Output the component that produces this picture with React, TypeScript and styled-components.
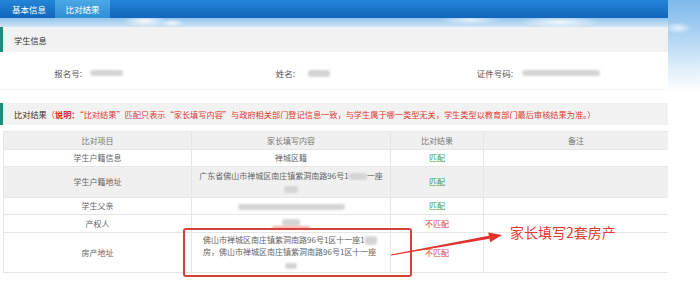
import styled, { createGlobalStyle } from "styled-components";

const GlobalStyle = createGlobalStyle`
  html, body {
    margin: 0;
    padding: 0;
    background: #fff;
  }
  body {
    font-family: "Noto Sans CJK SC", "Noto Sans", sans-serif;
  }
`;

const Page = styled.div`
  position: relative;
  display: flex;
  width: 700px;
  height: 293px;
  overflow: hidden;
  background: #fff;
`;

const Main = styled.div`
  width: 668px;
  flex-shrink: 0;
`;

const SkySide = styled.div`
  flex: 1;
  background:
    radial-gradient(ellipse 14px 6px at 10px 28px, rgba(255, 255, 255, 0.7), transparent),
    linear-gradient(180deg, #7db8ea 0%, #a6cff2 30px, #d6eaf9 62px, #ffffff 92px);
`;

const TabBar = styled.div`
  display: flex;
  height: 18px;
  padding-left: 3px;
  background: linear-gradient(180deg, #2385d8 0%, #1266bb 100%);
`;

const Tab = styled.div<{ $active?: boolean }>`
  display: flex;
  align-items: center;
  justify-content: center;
  width: ${(p) => (p.$active ? 55 : 52)}px;
  font-size: 8.5px;
  color: #fff;
  background: ${(p) =>
    p.$active ? "linear-gradient(180deg, #4aa8e6 0%, #2f8fd6 100%)" : "transparent"};
`;

const SkyBand = styled.div`
  height: 9px;
  background:
    radial-gradient(ellipse 22px 6px at 145px 3px, rgba(255, 255, 255, 0.9), transparent),
    radial-gradient(ellipse 12px 4px at 172px 5px, rgba(255, 255, 255, 0.8), transparent),
    radial-gradient(ellipse 30px 5px at 470px 2px, rgba(255, 255, 255, 0.7), transparent),
    radial-gradient(ellipse 40px 6px at 560px 4px, rgba(255, 255, 255, 0.8), transparent),
    linear-gradient(180deg, #93c4ec 0%, #cfe5f6 100%);
`;

const SectionHead = styled.div<{ $h: number; $gap?: number }>`
  display: flex;
  align-items: center;
  height: ${(p) => p.$h}px;
  margin-top: ${(p) => p.$gap ?? 0}px;
  padding-left: 11px;
  border-left: 3px solid #1c8c7c;
  background: #f2f2f2;
  font-size: 8.2px;
  color: #333;
  white-space: nowrap;
`;

const RedNote = styled.span`
  color: #e03a30;
`;

const RedBold = styled.b`
  color: #d82a20;
  font-weight: 700;
`;

const InfoRow = styled.div`
  display: flex;
  align-items: center;
  height: 38px;
  padding-top: 5px;
  box-sizing: border-box;
  border-bottom: 1px solid #f4f4f4;
`;

const Field = styled.div<{ $w?: number }>`
  display: flex;
  align-items: center;
  width: ${(p) => (p.$w ? `${p.$w}px` : "auto")};
  flex-shrink: 0;
`;

const Label = styled.span<{ $w: number; $gap: number }>`
  width: ${(p) => p.$w}px;
  margin-right: ${(p) => p.$gap}px;
  text-align: right;
  font-size: 8.5px;
  color: #555;
`;

const Blur = styled.span<{ $w: number; $h?: number; $pink?: boolean }>`
  display: inline-block;
  vertical-align: middle;
  width: ${(p) => p.$w}px;
  height: ${(p) => p.$h ?? 6}px;
  border-radius: 3px;
  background: ${(p) => (p.$pink ? "#f2b3ad" : "#d4d4d4")};
  filter: blur(1.2px);
`;

const Table = styled.table`
  margin: 6px 0 0 3px;
  width: 665px;
  border-collapse: collapse;
  table-layout: fixed;
  font-size: 8px;
  color: #666;
`;

const Row = styled.tr<{ $h: number; $shade?: boolean }>`
  height: ${(p) => p.$h}px;
  background: ${(p) => (p.$shade ? "#f0f0f0" : "#fff")};
`;

const Cell = styled.td<{ $left?: boolean }>`
  padding: 0 ${(p) => (p.$left ? "11px" : "0")};
  border: 1px solid #e6e6e6;
  text-align: ${(p) => (p.$left ? "left" : "center")};
  line-height: 12px;
  white-space: nowrap;
  overflow: hidden;
`;

const HeadCell = styled(Cell)`
  color: #777;
`;

const Stack = styled.div<{ $center?: boolean }>`
  display: flex;
  flex-direction: column;
  align-items: ${(p) => (p.$center ? "center" : "flex-start")};
`;

const Spot = styled.div`
  align-self: center;
  margin-top: 1px;
`;

const Result = styled.span<{ $ok: boolean }>`
  color: ${(p) => (p.$ok ? "#3a9b3a" : "#d9463e")};
`;

const Marker = styled.div`
  position: absolute;
  left: 183px;
  top: 228px;
  width: 229px;
  height: 49px;
  box-sizing: border-box;
  border: 2px solid #d2413a;
  border-radius: 3px;
`;

const Arrow = styled.svg`
  position: absolute;
  left: 380px;
  top: 220px;
`;

const Callout = styled.div`
  position: absolute;
  left: 510px;
  top: 222px;
  font-size: 14px;
  line-height: 20px;
  color: #e23b2e;
  white-space: nowrap;
`;

const rows = [
  { name: "学生户籍信息", h: 17, ok: true },
  { name: "学生户籍地址", h: 31, ok: true, shade: true },
  { name: "学生父亲", h: 17, ok: true },
  { name: "产权人", h: 18, ok: false },
  { name: "房产地址", h: 40, ok: false },
];

function content(name: string) {
  switch (name) {
    case "学生户籍信息":
      return "禅城区籍";
    case "学生户籍地址":
      return (
        <Stack $center>
          <span>
            广东省佛山市禅城区南庄镇紫洞南路96号1<Blur $w={18} $h={7} />一座
          </span>
          <Spot>
            <Blur $w={14} $h={7} />
          </Spot>
        </Stack>
      );
    case "学生父亲":
      return <Blur $w={107} $h={6} />;
    case "产权人":
      return (
        <Stack $center>
          <Blur $w={18} $h={7} />
          <Blur $w={38} $h={3} $pink />
        </Stack>
      );
    default:
      return null;
  }
}

export default function App() {
  return (
    <>
      <GlobalStyle />
      <Page>
        <Main>
          <TabBar>
            <Tab>基本信息</Tab>
            <Tab $active>比对结果</Tab>
          </TabBar>
          <SkyBand />

          <SectionHead $h={25}>学生信息</SectionHead>
          <InfoRow>
            <Field $w={222}>
              <Label $w={82} $gap={8}>报名号:</Label>
              <Blur $w={33} $h={6} />
            </Field>
            <Field $w={222}>
              <Label $w={73} $gap={13}>姓名:</Label>
              <Blur $w={22} $h={7} />
            </Field>
            <Field>
              <Label $w={69} $gap={9}>证件号码:</Label>
              <Blur $w={78} $h={6} />
            </Field>
          </InfoRow>

          <SectionHead $h={22} $gap={13}>
            比对结果
            <RedNote>
              （<RedBold>说明：</RedBold>“比对结果”匹配只表示“家长填写内容”与政府相关部门登记信息一致，与学生属于哪一类型无关，学生类型以教育部门最后审核结果为准。）
            </RedNote>
          </SectionHead>

          <Table>
            <colgroup>
              <col style={{ width: 188 }} />
              <col style={{ width: 199 }} />
              <col style={{ width: 93 }} />
              <col style={{ width: 185 }} />
            </colgroup>
            <tbody>
              <Row $h={18} $shade>
                <HeadCell>比对项目</HeadCell>
                <HeadCell>家长填写内容</HeadCell>
                <HeadCell>比对结果</HeadCell>
                <HeadCell>备注</HeadCell>
              </Row>
              {rows.map((r) => (
                <Row key={r.name} $h={r.h} $shade={r.shade}>
                  <Cell>{r.name}</Cell>
                  {r.name === "房产地址" ? (
                    <Cell $left>
                      <Stack>
                        <span>
                          佛山市禅城区南庄镇紫洞南路96号1区十一座1<Blur $w={12} $h={9} />
                        </span>
                        <span>房，佛山市禅城区南庄镇紫洞南路96号1区十一座</span>
                        <Spot>
                          <Blur $w={12} $h={6} />
                        </Spot>
                      </Stack>
                    </Cell>
                  ) : (
                    <Cell>{content(r.name)}</Cell>
                  )}
                  <Cell>
                    <Result $ok={r.ok}>{r.ok ? "匹配" : "不匹配"}</Result>
                  </Cell>
                  <Cell />
                </Row>
              ))}
            </tbody>
          </Table>
        </Main>
        <SkySide />

        <Marker />
        <Arrow width="130" height="40" viewBox="0 0 130 40">
          <polygon
            points="11.1,35.5 10.9,34.5 108.9,15.8 109.5,18.8"
            fill="#e0312a"
          />
          <polygon points="122,15 110.1,22.2 108.3,12.4" fill="#e0312a" />
        </Arrow>
        <Callout>家长填写2套房产</Callout>
      </Page>
    </>
  );
}
